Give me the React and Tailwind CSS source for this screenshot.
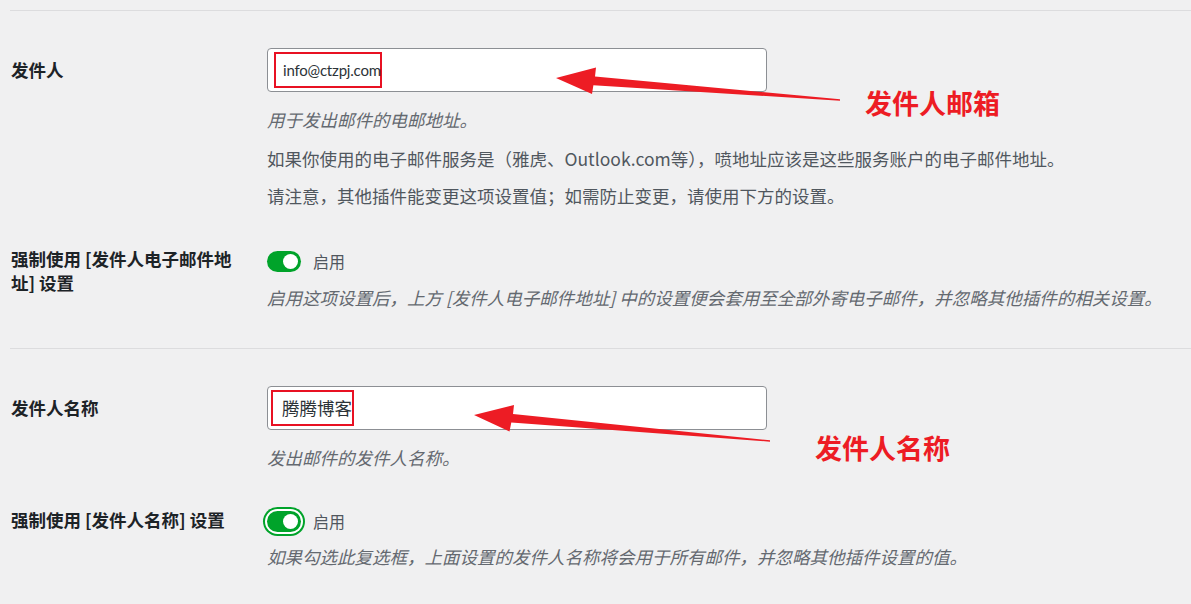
import React from "react";

const FONT = { fontFamily: '"Noto Sans CJK SC", "Noto Sans", sans-serif' };

function Toggle({ focused }) {
  return (
    <span
      className={
        "relative inline-flex items-center justify-end w-[34px] h-[21px] rounded-full bg-[#00a32a] pr-[3px] " +
        (focused ? "shadow-[0_0_0_2px_#ffffff,0_0_0_4px_#00a32a]" : "")
      }
    >
      <span className="block w-[15px] h-[15px] rounded-full bg-white" />
    </span>
  );
}

function Arrows() {
  return (
    <svg
      className="absolute left-0 top-0 pointer-events-none"
      width="1191"
      height="604"
      viewBox="0 0 1191 604"
    >
      <polygon
        fill="#ed1c24"
        points="840,99.3 595,76.6 596,67.5 556,78 592,94 593.4,85.2 840,100.7"
      />
      <polygon
        fill="#ed1c24"
        points="770,440.3 513,414.1 514,405 474,415 509.5,431.5 511.3,422.6 770,441.7"
      />
    </svg>
  );
}

export default function App() {
  return (
    <div
      className="relative w-full min-h-[604px] bg-[#f0f0f1] text-[#1d2327] overflow-hidden"
      style={FONT}
    >
      <div className="pt-[10px]">
        <div className="ml-[10px] border-t border-[#dcdcde]" />
      </div>

      {/* Row 1: 发件人 */}
      <div className="flex pl-[11px] pt-[37px]">
        <div className="w-[256px] shrink-0 pt-[10px] text-[17.5px] leading-[24px] font-bold">
          发件人
        </div>
        <div className="flex flex-col">
          <div className="w-[500px] h-[44px] rounded-[4px] border border-[#8c8f94] bg-white flex items-center pl-[6px]">
            <span
              className="inline-flex items-center h-[36px] w-[108px] border-2 border-[#e81123] pl-[7px] text-[15px] tracking-[-0.2px] text-[#2c3338] whitespace-nowrap"
              style={{ fontFamily: 'Lato, "Noto Sans", sans-serif' }}
            >
              info@ctzpj.com
            </span>
          </div>
          <p className="mt-[15px] text-[17.5px] leading-[26px] italic text-[#646970]">
            用于发出邮件的电邮地址。
          </p>
          <p className="mt-[13px] text-[17.5px] leading-[26px] text-[#50575e]">
            如果你使用的电子邮件服务是（雅虎、Outlook.com等），喷地址应该是这些服务账户的电子邮件地址。
          </p>
          <p className="mt-[11px] text-[17.5px] leading-[26px] text-[#50575e]">
            请注意，其他插件能变更这项设置值；如需防止变更，请使用下方的设置。
          </p>
        </div>
      </div>

      {/* Row 2 */}
      <div className="flex pl-[11px] pt-[38px]">
        <div className="w-[256px] shrink-0 text-[17.5px] leading-[24px] font-bold">
          <div className="w-[236px]">强制使用 [发件人电子邮件地址] 设置</div>
        </div>
        <div className="flex flex-col pt-[2px]">
          <div className="flex items-center h-[24px] gap-[12px]">
            <Toggle />
            <span className="text-[16px] text-[#50575e]">启用</span>
          </div>
          <p className="mt-[12px] text-[17.5px] leading-[26px] italic text-[#646970]">
            启用这项设置后，上方 [发件人电子邮件地址] 中的设置便会套用至全部外寄电子邮件，并忽略其他插件的相关设置。
          </p>
        </div>
      </div>

      <div className="ml-[10px] mt-[37px] border-t border-[#dcdcde]" />

      {/* Row 3: 发件人名称 */}
      <div className="flex pl-[11px] pt-[37px]">
        <div className="w-[256px] shrink-0 pt-[10px] text-[17.5px] leading-[24px] font-bold">
          发件人名称
        </div>
        <div className="flex flex-col">
          <div className="w-[500px] h-[44px] rounded-[4px] border border-[#8c8f94] bg-white flex items-center pl-[3px]">
            <span className="inline-flex items-center h-[36px] border-2 border-[#e81123] pl-[9px] text-[17.5px] text-[#2c3338] whitespace-nowrap">
              腾腾博客
            </span>
          </div>
          <p className="mt-[15px] text-[17.5px] leading-[26px] italic text-[#646970]">
            发出邮件的发件人名称。
          </p>
        </div>
      </div>

      {/* Row 4 */}
      <div className="flex pl-[11px] pt-[37px]">
        <div className="w-[256px] shrink-0 text-[17.5px] leading-[24px] font-bold">
          强制使用 [发件人名称] 设置
        </div>
        <div className="flex flex-col pt-[1px]">
          <div className="flex items-center h-[24px] gap-[12px]">
            <Toggle focused />
            <span className="text-[16px] text-[#50575e]">启用</span>
          </div>
          <p className="mt-[11px] text-[17.5px] leading-[26px] italic text-[#646970]">
            如果勾选此复选框，上面设置的发件人名称将会用于所有邮件，并忽略其他插件设置的值。
          </p>
        </div>
      </div>

      <Arrows />

      <div className="absolute left-[865px] top-[86px] text-[27px] leading-[34px] font-bold text-[#ed1c24]">
        发件人邮箱
      </div>
      <div className="absolute left-[815px] top-[431px] text-[27px] leading-[34px] font-bold text-[#ed1c24]">
        发件人名称
      </div>
    </div>
  );
}
